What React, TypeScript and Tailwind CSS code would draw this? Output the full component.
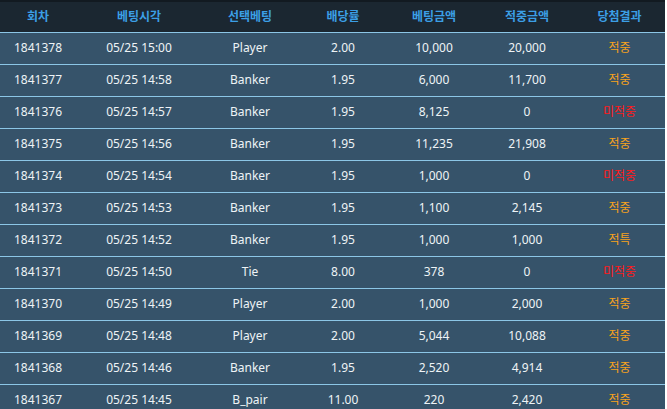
import React from "react";

interface Row {
  round: string;
  time: string;
  pick: string;
  odds: string;
  bet: string;
  win: string;
  result: "적중" | "미적중" | "적특";
}

const rows: Row[] = [
  { round: "1841378", time: "05/25 15:00", pick: "Player", odds: "2.00", bet: "10,000", win: "20,000", result: "적중" },
  { round: "1841377", time: "05/25 14:58", pick: "Banker", odds: "1.95", bet: "6,000", win: "11,700", result: "적중" },
  { round: "1841376", time: "05/25 14:57", pick: "Banker", odds: "1.95", bet: "8,125", win: "0", result: "미적중" },
  { round: "1841375", time: "05/25 14:56", pick: "Banker", odds: "1.95", bet: "11,235", win: "21,908", result: "적중" },
  { round: "1841374", time: "05/25 14:54", pick: "Banker", odds: "1.95", bet: "1,000", win: "0", result: "미적중" },
  { round: "1841373", time: "05/25 14:53", pick: "Banker", odds: "1.95", bet: "1,100", win: "2,145", result: "적중" },
  { round: "1841372", time: "05/25 14:52", pick: "Banker", odds: "1.95", bet: "1,000", win: "1,000", result: "적특" },
  { round: "1841371", time: "05/25 14:50", pick: "Tie", odds: "8.00", bet: "378", win: "0", result: "미적중" },
  { round: "1841370", time: "05/25 14:49", pick: "Player", odds: "2.00", bet: "1,000", win: "2,000", result: "적중" },
  { round: "1841369", time: "05/25 14:48", pick: "Player", odds: "2.00", bet: "5,044", win: "10,088", result: "적중" },
  { round: "1841368", time: "05/25 14:46", pick: "Banker", odds: "1.95", bet: "2,520", win: "4,914", result: "적중" },
  { round: "1841367", time: "05/25 14:45", pick: "B_pair", odds: "11.00", bet: "220", win: "2,420", result: "적중" },
];

const headers = ["회차", "베팅시각", "선택베팅", "배당률", "베팅금액", "적중금액", "당첨결과"];
const widths = [76, 126, 96, 90, 92, 94, 91];

export default function App() {
  return (
    <div className="h-[409px] w-[667px] overflow-hidden bg-white font-['Noto_Sans','Noto_Sans_CJK_KR',sans-serif] text-[12px]">
      <table className="w-[665px] table-fixed border-collapse">
        <colgroup>
          {widths.map((w, i) => (
            <col key={i} style={{ width: w }} />
          ))}
        </colgroup>
        <thead>
          <tr className="bg-[#1b2731]">
            {headers.map((h) => (
              <th
                key={h}
                className="h-[31px] border-t-2 border-b border-t-[#121a21] border-b-[#8cc6e6] p-0 text-center font-semibold text-[#3b9fe6]"
              >
                {h}
              </th>
            ))}
          </tr>
        </thead>
        <tbody>
          {rows.map((r) => (
            <tr key={r.round} className="bg-[#36536a] text-[#eef3f6]">
              <td className="h-[32px] border-b border-[#8cc6e6] p-0 text-center">{r.round}</td>
              <td className="h-[32px] border-b border-[#8cc6e6] p-0 text-center">{r.time}</td>
              <td className="h-[32px] border-b border-[#8cc6e6] p-0 text-center">{r.pick}</td>
              <td className="h-[32px] border-b border-[#8cc6e6] p-0 text-center">{r.odds}</td>
              <td className="h-[32px] border-b border-[#8cc6e6] p-0 text-center">{r.bet}</td>
              <td className="h-[32px] border-b border-[#8cc6e6] p-0 text-center">{r.win}</td>
              <td
                className={`h-[32px] border-b border-[#8cc6e6] p-0 text-center ${
                  r.result === "미적중" ? "text-[#ff1a1a]" : "text-[#f7a21b]"
                }`}
              >
                {r.result}
              </td>
            </tr>
          ))}
        </tbody>
      </table>
    </div>
  );
}
